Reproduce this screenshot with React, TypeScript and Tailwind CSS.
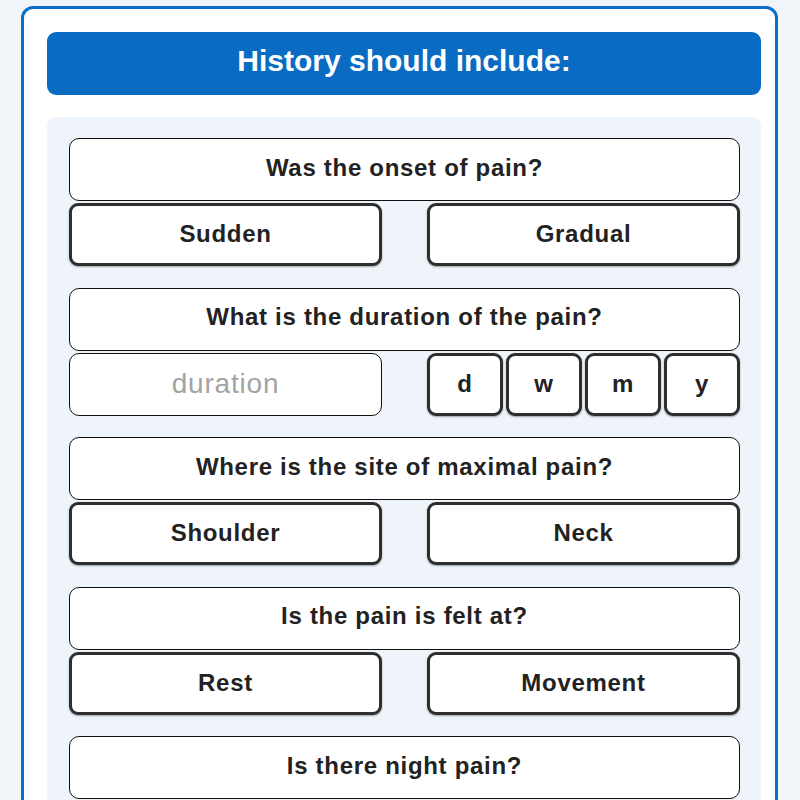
import React from "react";

type Group =
  | { kind: "choice"; question: string; options: [string, string] }
  | { kind: "duration"; question: string; placeholder: string; units: string[] };

const groups: Group[] = [
  { kind: "choice", question: "Was the onset of pain?", options: ["Sudden", "Gradual"] },
  { kind: "duration", question: "What is the duration of the pain?", placeholder: "duration", units: ["d", "w", "m", "y"] },
  { kind: "choice", question: "Where is the site of maximal pain?", options: ["Shoulder", "Neck"] },
  { kind: "choice", question: "Is the pain is felt at?", options: ["Rest", "Movement"] },
  { kind: "choice", question: "Is there night pain?", options: ["Yes", "No"] },
];

const font = { fontFamily: '"Liberation Sans", Arial, sans-serif' };

function OptionButton({ label }: { label: string }) {
  return (
    <button
      type="button"
      className="flex h-full items-center justify-center rounded-[9px] border-[3px] border-[#2e2e2e] bg-white pb-[1px] text-[24px] font-bold tracking-[0.7px] text-[#222] shadow-[0_1px_2px_rgba(0,0,0,0.35)]"
    >
      {label}
    </button>
  );
}

function QuestionBlock({ group }: { group: Group }) {
  return (
    <div className="flex flex-col gap-[2px]">
      <div className="flex h-[63px] items-center justify-center rounded-[10px] border-[1.5px] border-[#111] bg-white pb-[4px] text-[24px] font-bold tracking-[0.7px] text-[#222]">
        {group.question}
      </div>
      <div className="grid h-[63px] grid-cols-2 gap-[45px]">
        {group.kind === "choice" ? (
          <>
            <OptionButton label={group.options[0]} />
            <OptionButton label={group.options[1]} />
          </>
        ) : (
          <>
            <input
              placeholder={group.placeholder}
              className="h-full w-full rounded-[10px] border-[1.5px] border-[#111] bg-white pb-[1px] text-center text-[28px] tracking-[0.8px] text-[#222] placeholder:text-[#a3a3a3] outline-none"
              style={font}
            />
            <div className="grid grid-cols-4 gap-[3px]">
              {group.units.map((u) => (
                <OptionButton key={u} label={u} />
              ))}
            </div>
          </>
        )}
      </div>
    </div>
  );
}

export default function App() {
  return (
    <div className="h-[800px] w-full overflow-hidden bg-[#f0f5fa] pl-[21px] pr-[22px] pt-[6px]" style={font}>
      <div className="h-[820px] rounded-[12px] border-[3px] border-[#0b6dcd] bg-white pl-[23px] pr-[14px] pt-[23px]">
        <div className="flex h-[63px] items-center justify-center rounded-[9px] bg-[#0a6bc3] pb-[7px] text-[30px] font-bold text-white">
          History should include:
        </div>
        <div className="mt-[22px] flex flex-col gap-[21.5px] rounded-[9px] bg-[#eef4fa] pb-6 pl-[22px] pr-[21px] pt-[21px]">
          {groups.map((g, i) => (
            <QuestionBlock key={i} group={g} />
          ))}
        </div>
      </div>
    </div>
  );
}
